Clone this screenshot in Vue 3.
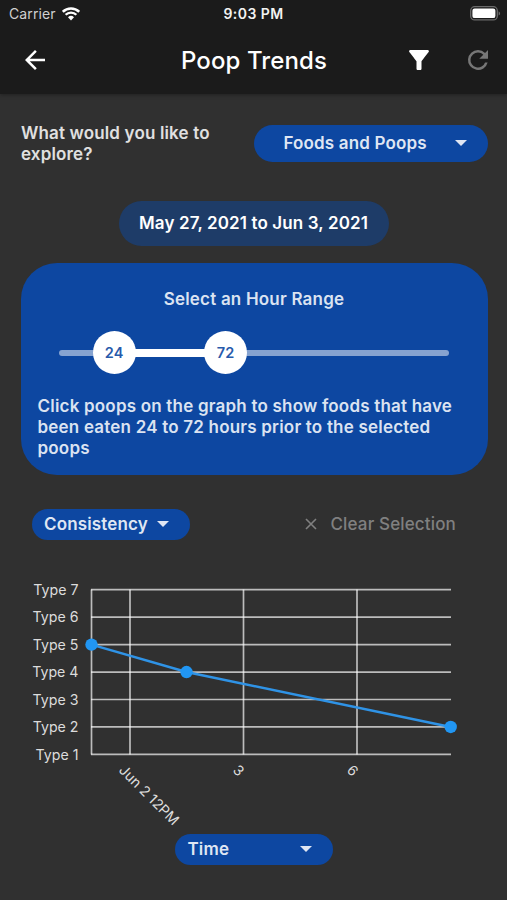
<template>
  <div class="screen">
    <header class="header">
      <div class="status-bar">
        <div class="carrier">
          <span class="carrier-name">Carrier</span>
          <svg class="wifi" width="18" height="14" viewBox="0 0 18 14" fill="none">
            <path d="M0.8 4.8A11.6 11.6 0 0 1 17.2 4.8" stroke="#fff" stroke-width="2.5"/>
            <path d="M3.6 7.8A7.7 7.7 0 0 1 14.4 7.8" stroke="#fff" stroke-width="2.3"/>
            <path d="M6 10.2A4.4 4.4 0 0 1 12 10.2L9 13.4Z" fill="#fff"/>
          </svg>
        </div>
        <span class="clock">9:03 PM</span>
        <div class="battery-wrap">
          <svg width="31" height="15" viewBox="0 0 31 15" fill="none">
            <rect x="0.7" y="0.7" width="26.6" height="13.2" rx="4" stroke="#6b6b6b" stroke-width="1.3"/>
            <rect x="2.4" y="2.5" width="23" height="9.6" rx="2.2" fill="#fff"/>
            <path d="M28.6 5.2C30.6 6 30.6 8.8 28.6 9.6Z" fill="#6b6b6b"/>
          </svg>
        </div>
      </div>

      <div class="nav-bar">
        <button class="icon-btn back">
          <svg width="30" height="30" viewBox="0 0 24 24" fill="#fff">
            <path d="M20 11H7.83l5.59-5.59L12 4l-8 8 8 8 1.41-1.41L7.83 13H20v-2z"/>
          </svg>
        </button>
        <h1 class="title">Poop Trends</h1>
        <div class="actions">
          <button class="icon-btn">
            <svg width="30" height="30" viewBox="0 0 24 24" fill="#fff">
              <path d="M4.25 5.61C6.27 8.2 10 13 10 13v6c0 .55.45 1 1 1h2c.55 0 1-.45 1-1v-6s3.72-4.8 5.74-7.39C20.25 4.95 19.78 4 18.95 4H5.04c-.83 0-1.3.95-.79 1.61z"/>
            </svg>
          </button>
          <button class="icon-btn">
            <svg width="30" height="30" viewBox="0 0 24 24" fill="#777">
              <path d="M17.65 6.35A7.96 7.96 0 0 0 12 4a8 8 0 1 0 7.73 10h-2.08A6 6 0 1 1 12 6c1.66 0 3.14.69 4.22 1.78L13 11h7V4l-2.35 2.35z"/>
            </svg>
          </button>
        </div>
      </div>
    </header>

    <main class="content">
      <div class="explore">
        <p class="question">What would you like to explore?</p>
        <button class="dropdown dropdown-big">
          <span>{{ explore }}</span>
          <svg class="caret" width="14" height="8" viewBox="0 0 14 8"><path d="M1 1H13L7 7Z" fill="currentColor"/></svg>
        </button>
      </div>

      <button class="date-range"><span>May 27, 2021 to Jun 3, 2021</span></button>

      <section class="card">
        <h2 class="card-title">Select an Hour Range</h2>
        <div class="slider">
          <div class="track"></div>
          <div class="range" :style="{ left: pos(hours[0]) + '%', width: pos(hours[1]) - pos(hours[0]) + '%' }"></div>
          <div v-for="h in hours" :key="h" class="thumb" :style="{ left: pos(h) + '%' }">{{ h }}</div>
        </div>
        <p class="hint">
          Click poops on the graph to show foods that have<br>
          been eaten {{ hours[0] }} to {{ hours[1] }} hours prior to the selected<br>
          poops
        </p>
      </section>

      <div class="toolbar">
        <button class="dropdown dropdown-y">
          <span>Consistency</span>
          <svg class="caret" width="14" height="8" viewBox="0 0 14 8"><path d="M1 1H13L7 7Z" fill="currentColor"/></svg>
        </button>
        <button class="clear">
          <svg width="12" height="12" viewBox="0 0 12 12" stroke="#808080" stroke-width="1.6"><path d="M1 1L11 11M11 1L1 11"/></svg>
          <span>Clear Selection</span>
        </button>
      </div>

      <svg class="chart" width="507" height="260" viewBox="0 574 507 260">
        <g stroke="#fff" stroke-opacity="0.68" stroke-width="1.7">
          <line v-for="t in types" :key="t" x1="91" x2="451" :y1="typeY(t)" :y2="typeY(t)"/>
          <line x1="91.5" x2="91.5" y1="589.5" y2="754.5"/>
          <line v-for="tick in ticks" :key="tick.label" :x1="tick.x" :x2="tick.x" y1="589.5" y2="754.5"/>
        </g>
        <text v-for="t in types" :key="t" class="axis" text-anchor="end" x="78.5" :y="typeY(t) + 5.3">Type {{ t }}</text>
        <text
          v-for="tick in ticks"
          :key="tick.label"
          class="axis"
          :transform="`translate(${tick.lx} ${tick.ly}) rotate(45)`"
        >{{ tick.label }}</text>
        <polyline :points="linePoints" fill="none" stroke="#2f93e6" stroke-width="2.5"/>
        <circle v-for="p in points" :key="p.x" :cx="p.x" :cy="typeY(p.type)" r="6.2" fill="#2196f3"/>
      </svg>

      <button class="dropdown dropdown-x">
        <span>Time</span>
        <svg class="caret" width="14" height="8" viewBox="0 0 14 8"><path d="M1 1H13L7 7Z" fill="currentColor"/></svg>
      </button>
    </main>
  </div>
</template>

<script setup>
import { ref, computed } from 'vue';

const explore = ref('Foods and Poops');

// Hour range slider, 0 to 168 hours
const hours = ref([24, 72]);
const pos = (h) => (h / 168) * 100;

// Chart
const types = [7, 6, 5, 4, 3, 2, 1];
const typeY = (t) => 754.4 - (t - 1) * 27.45;

const ticks = [
  { label: 'Jun 2 12PM', x: 130, lx: 118, ly: 771 },
  { label: '3', x: 243.5, lx: 232, ly: 771 },
  { label: '6', x: 357, lx: 346, ly: 771 },
];

const points = ref([
  { x: 91.5, type: 5 },
  { x: 186.5, type: 4 },
  { x: 450.7, type: 2 },
]);

const linePoints = computed(() => points.value.map((p) => `${p.x},${typeY(p.type)}`).join(' '));
</script>

<style>
body {
  margin: 0;
  background: #303030;
}
</style>

<style scoped>
.screen {
  width: 507px;
  height: 900px;
  overflow: hidden;
  background: #303030;
  font-family: Inter, 'Liberation Sans', sans-serif;
  color: #e0e0e0;
}

button {
  border: none;
  background: none;
  padding: 0;
  color: inherit;
  font: inherit;
  letter-spacing: inherit;
  white-space: nowrap;
}

h1, h2, p {
  margin: 0;
}

svg {
  display: block;
  flex: none;
}

.header {
  height: 94px;
  background: #1b1b1b;
  box-shadow: 0 1px 4px rgba(0, 0, 0, 0.35);
}

.status-bar {
  display: grid;
  grid-template-columns: 1fr auto 1fr;
  align-items: center;
  height: 27px;
  padding: 0 6px 0 9px;
  font-size: 14px;
}

.carrier {
  display: flex;
  align-items: center;
  gap: 6px;
  color: #d0d0d0;
}

.carrier-name {
  letter-spacing: 0.1px;
}

.clock {
  margin-right: 3px;
  font-size: 14px;
  font-weight: 600;
  letter-spacing: 0.45px;
  color: #f2f2f2;
}

.battery-wrap {
  display: flex;
  justify-content: flex-end;
}

.nav-bar {
  display: grid;
  grid-template-columns: 1fr auto 1fr;
  align-items: center;
  height: 66px;
  padding: 0 14px 0 20px;
}

.title {
  margin-right: 5px;
  font-size: 24px;
  font-weight: 500;
  letter-spacing: 0.1px;
  color: #fff;
}

.actions {
  display: flex;
  justify-content: flex-end;
  gap: 29px;
}

.content {
  display: flex;
  flex-direction: column;
  padding-top: 28.5px;
  letter-spacing: 0.15px;
}

.explore {
  display: flex;
  justify-content: space-between;
  align-items: center;
  padding: 0 19.5px 0 21px;
}

.question {
  width: 200px;
  font-size: 17px;
  font-weight: 600;
  line-height: 21px;
}

.dropdown {
  display: flex;
  justify-content: space-between;
  align-items: center;
  box-sizing: border-box;
  background: #0d47a1;
  border-radius: 20px;
  font-size: 17px;
  font-weight: 600;
  color: #dfe6f3;
}

.dropdown-big {
  width: 234px;
  height: 37px;
  padding: 0 20px 2px 30px;
}

.date-range {
  align-self: center;
  width: 270px;
  height: 45px;
  margin-top: 36px;
  background: #1e3c68;
  border-radius: 23px;
  font-size: 17px;
  font-weight: 600;
  letter-spacing: 0.12px;
  color: #fff;
}

.card {
  box-sizing: border-box;
  height: 212px;
  margin: 17px 19.5px 0 20.5px;
  padding: 26px 17px 0;
  background: #0d47a1;
  border-radius: 36px;
  color: #dbe3f1;
}

.card-title {
  font-size: 17px;
  font-weight: 600;
  line-height: 21px;
  letter-spacing: 0.2px;
  text-align: center;
}

.slider {
  position: relative;
  height: 44px;
  margin: 21px 22px 0 21px;
}

.track,
.range {
  position: absolute;
  top: 19px;
  left: 0;
  width: 100%;
  height: 6px;
  border-radius: 3px;
  background: #86a3d0;
}

.range {
  top: 18px;
  height: 8px;
  background: #fff;
}

.thumb {
  position: absolute;
  top: 0;
  width: 43px;
  height: 43px;
  margin-left: -21.5px;
  border-radius: 50%;
  background: #fff;
  color: #275aab;
  font-size: 14.5px;
  font-weight: 600;
  line-height: 43px;
  text-align: center;
}

.hint {
  margin-top: 21px;
  font-size: 17px;
  font-weight: 600;
  line-height: 21px;
  letter-spacing: 0.2px;
  white-space: nowrap;
}

.toolbar {
  display: flex;
  justify-content: space-between;
  align-items: center;
  height: 31px;
  margin-top: 34px;
  padding: 0 51px 0 32px;
}

.dropdown-y {
  width: 158px;
  height: 31px;
  padding: 0 20px 0 12px;
}

.clear {
  display: flex;
  align-items: center;
  gap: 13px;
  font-size: 17px;
  font-weight: 500;
  color: #808080;
}

.chart {
  margin-top: 34px;
  letter-spacing: 0;
}

.axis {
  font-size: 14.2px;
  fill: #dcdcdc;
}

.dropdown-x {
  align-self: center;
  width: 158px;
  height: 31px;
  padding: 0 20px 0 13px;
}
</style>
